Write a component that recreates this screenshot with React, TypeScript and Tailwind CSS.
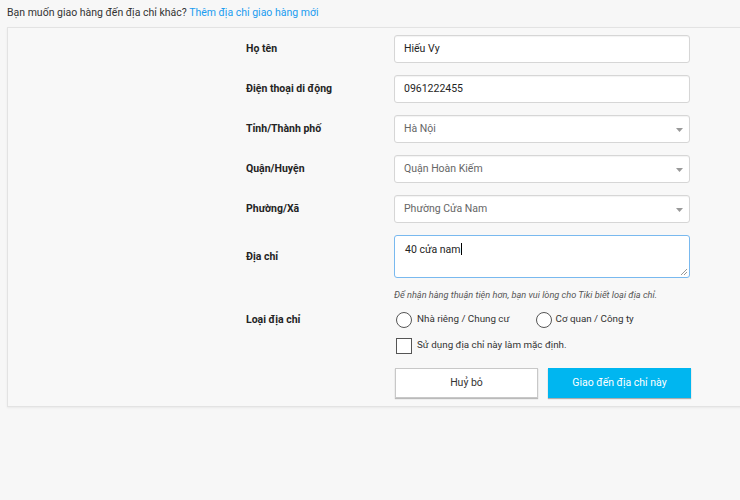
import React from 'react';

const fields = [
  { label: 'Họ tên', value: 'Hiếu Vy', type: 'input' },
  { label: 'Điện thoại di động', value: '0961222455', type: 'input' },
  { label: 'Tỉnh/Thành phố', value: 'Hà Nội', type: 'select' },
  { label: 'Quận/Huyện', value: 'Quận Hoàn Kiếm', type: 'select' },
  { label: 'Phường/Xã', value: 'Phường Cửa Nam', type: 'select' },
];

const Caret = () => (
  <svg width="7" height="4" viewBox="0 0 7 4" className="absolute right-[6px] top-[12px]">
    <path d="M0 0 L7 0 L3.5 4 Z" fill="#999" />
  </svg>
);

const App = () => {
  return (
    <div
      className="min-h-[500px] w-[740px] overflow-hidden bg-[#f7f7f7] text-[10.5px] text-[#242424]"
      style={{ fontFamily: 'Roboto, "Liberation Sans", sans-serif' }}
    >
      <div className="h-[27px] pl-[7px] pt-[5px] text-[10.5px] text-[#333]">
        Bạn muốn giao hàng đến địa chỉ khác?{' '}
        <a className="text-[#1a9cf0]">Thêm địa chỉ giao hàng mới</a>
      </div>

      {/* khung form */}
      <div className="ml-[7px] w-[760px] border border-[#e3e3e3] bg-[#f8f8f8] pb-[8px] pl-[238px] pt-[7px] shadow-[0_1px_2px_rgba(0,0,0,0.06)]">
        <div className="flex flex-col gap-3">
          {fields.map((f) => (
            <div key={f.label} className="flex h-[28px] items-center">
              <div className="w-[148px] font-bold">{f.label}</div>
              <div
                className={`relative flex h-[28px] w-[296px] items-center rounded-[3px] border border-[#d6d6d6] bg-white pl-[9px] shadow-[inset_0_1px_1px_rgba(0,0,0,0.05)] ${
                  f.type === 'select' ? 'text-[#666]' : 'text-[#242424]'
                }`}
              >
                {f.value}
                {f.type === 'select' && <Caret />}
              </div>
            </div>
          ))}

          <div className="flex items-center">
            <div className="w-[148px] font-bold">Địa chỉ</div>
            <div className="relative h-[43px] w-[296px] rounded-[3px] border border-[#79b9ef] bg-white pl-[10px] pt-[5px]">
              40 cửa nam
              <span className="ml-[1px] inline-block h-[12px] w-px translate-y-[2px] bg-black" />
              <svg width="9" height="9" viewBox="0 0 9 9" className="absolute bottom-[1px] right-[1px]">
                <path d="M8 2 L2 8 M8 5 L5 8" stroke="#999" strokeWidth="1" />
              </svg>
            </div>
          </div>
        </div>

        <div className="ml-[148px] mt-[10px] text-[9.2px] italic text-[#555]">
          Để nhận hàng thuận tiện hơn, bạn vui lòng cho Tiki biết loại địa chỉ.
        </div>

        <div className="mt-[9px] flex h-[18px] items-center">
          <div className="w-[148px] font-bold">Loại địa chỉ</div>
          <div className="flex items-center text-[9.8px] text-[#333]">
            <span className="ml-[2px] h-[16px] w-[16px] rounded-full border-[1.5px] border-[#555] bg-white" />
            <span className="ml-[5px]">Nhà riêng / Chung cư</span>
            <span className="ml-[26px] h-[16px] w-[16px] rounded-full border-[1.5px] border-[#555] bg-white" />
            <span className="ml-[4px]">Cơ quan / Công ty</span>
          </div>
        </div>

        <div className="ml-[150px] mt-[9px] flex items-center text-[9.8px] text-[#333]">
          <span className="h-[16px] w-[16px] border-[1.5px] border-[#555] bg-white" />
          <span className="ml-[5px]">Sử dụng địa chỉ này làm mặc định.</span>
        </div>

        <div className="ml-[149px] mt-[14px] flex gap-[10px]">
          <button className="h-[30px] w-[143px] border border-[#c8c8c8] bg-white text-[10.5px] text-[#333] shadow-[0_1px_1px_rgba(0,0,0,0.25)]">
            Huỷ bỏ
          </button>
          <button className="h-[30px] w-[143px] bg-[#00b6f0] text-[10.5px] text-white shadow-[0_1px_1px_rgba(0,0,0,0.3)]">
            Giao đến địa chỉ này
          </button>
        </div>
      </div>
    </div>
  );
};

export default App;
